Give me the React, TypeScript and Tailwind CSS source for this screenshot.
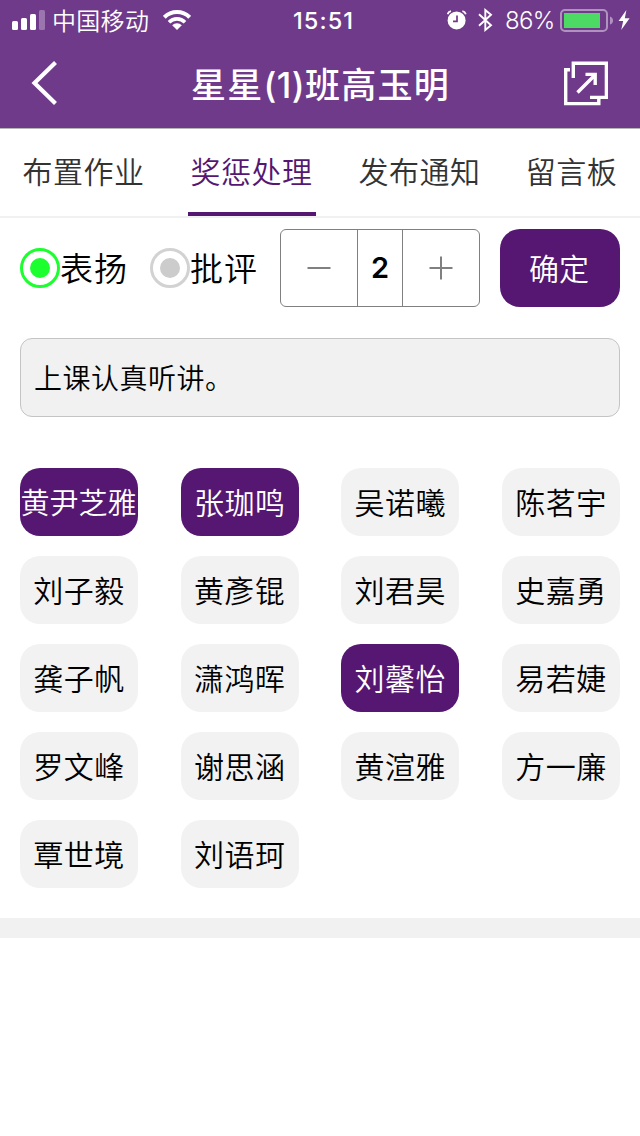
import { useState } from "react";
import clsx from "clsx";

const tabs = [
  { label: "布置作业", width: "w-32" },
  { label: "奖惩处理", width: "w-32" },
  { label: "发布通知", width: "w-32" },
  { label: "留言板", width: "w-24" },
];

const students = [
  "黄尹芝雅", "张珈鸣", "吴诺曦", "陈茗宇",
  "刘子毅", "黄彥锟", "刘君昊", "史嘉勇",
  "龚子帆", "潇鸿晖", "刘馨怡", "易若婕",
  "罗文峰", "谢思涵", "黄渲雅", "方一廉",
  "覃世境", "刘语珂",
];

const StatusBar = () => (
  <div className="flex h-10 items-center pl-3 pr-[10px]">
    <svg width="34" height="20" viewBox="0 0 34 20" fill="#fff">
      <rect x="0" y="11" width="6" height="9" rx="1.5" />
      <rect x="9" y="8" width="6" height="12" rx="1.5" />
      <rect x="18" y="4" width="6" height="16" rx="1.5" />
      <rect x="27" y="0" width="6" height="20" rx="1.5" opacity="0.3" />
    </svg>
    <div className="ml-[6px] w-[98px] whitespace-nowrap text-[24px] font-[350] leading-10 tracking-[0.3px]">中国移动</div>
    <svg className="ml-[13px]" width="28" height="20" viewBox="0 0 28 20" fill="none" stroke="#fff">
      <path d="M1.3 7.3A18 18 0 0 1 26.7 7.3" strokeWidth="4" />
      <path d="M6 12.2A11.3 11.3 0 0 1 22 12.2" strokeWidth="3.6" />
      <path d="M14 20L9.2 15.2A6.8 6.8 0 0 1 18.8 15.2Z" fill="#fff" stroke="none" />
    </svg>
    <div className="ml-[102px] w-[64px] whitespace-nowrap pt-0.5 font-['Inter'] text-[23.5px] font-medium leading-10 tracking-[1.1px]">15:51</div>
    <div className="flex flex-1 items-center justify-end">
      <svg width="20" height="20" viewBox="0 0 20 20">
        <circle cx="9.6" cy="10.4" r="9" fill="#fff" />
        <path d="M0.6 4.2Q1.4 1.6 4 1.1M18.8 4.2Q18 1.6 15.4 1.1" fill="none" stroke="#fff" strokeWidth="1.8" />
        <path d="M10 5.5V11.4H6" fill="none" stroke="#703a8a" strokeWidth="1.7" />
      </svg>
      <svg className="ml-[11px]" width="15" height="24" viewBox="0 0 15 24" fill="none" stroke="#fff" strokeWidth="1.9">
        <path d="M1 6.3L13 17.2L7.3 22V2L13 6.8L1 17.7" />
      </svg>
      <div className="ml-3 w-[55px] whitespace-nowrap pt-0.5 font-['Inter'] text-[24px] font-[350] leading-10 tracking-[-0.7px]">86%</div>
      <svg className="mt-px" width="54" height="24" viewBox="0 0 54 24">
        <rect x="1" y="1" width="46" height="21" rx="4" fill="none" stroke="#fff" strokeOpacity="0.45" strokeWidth="2" />
        <rect x="4" y="4" width="36" height="15" fill="#4cd964" />
        <path d="M50 7.5Q53 8.5 53 11.5T50 15.5Z" fill="#fff" fillOpacity="0.45" />
      </svg>
      <svg className="ml-1" width="12" height="20" viewBox="0 0 12 20" fill="#fff">
        <path d="M8.4 0L0.6 11H5.2L3.2 20L11.6 8.2H6.8Z" />
      </svg>
    </div>
  </div>
);

const Navbar = () => (
  <nav className="flex h-[88px] items-center justify-between px-[30px]">
    <svg className="-mt-0.5" width="48" height="44" viewBox="0 0 48 44" fill="none" stroke="#fff" strokeWidth="4.2">
      <path d="M25.5 1.5L4.5 22L25.5 42.5" />
    </svg>
    <h1 className="whitespace-nowrap pb-px pl-[3px] text-[35px] font-medium leading-[80px] tracking-[1.3px]">
      星星<span className="font-['Inter'] text-[35px] font-medium tracking-[0.3px]">(1)</span>班高玉明
    </h1>
    <svg className="-mt-0.5 mr-0.5" width="48" height="46" viewBox="0 0 48 46" fill="none" stroke="#fff" strokeWidth="3.4">
      <path d="M13.3 18V3.2H46.4V37.4H30" />
      <path d="M10 9.8H5.7V43.6H38.8V39" />
      <path d="M17.5 32.5L35 15M25.5 14.4H35.2V25" />
    </svg>
  </nav>
);

const Radio = ({ label, checked, onClick }: { label: string; checked: boolean; onClick: () => void }) => (
  <button className="flex w-[110px] items-center" onClick={onClick}>
    <span
      className={clsx(
        "flex size-10 shrink-0 items-center justify-center rounded-full border-[3px]",
        checked ? "border-[#1aff2d]" : "border-[#d2d2d2]"
      )}
    >
      <span className={clsx("size-5 rounded-full", checked ? "bg-[#1aff2d]" : "bg-[#cccccc]")} />
    </span>
    <span className="whitespace-nowrap pb-0.5 text-[33px] font-[350] leading-[38px] tracking-[1px]">{label}</span>
  </button>
);

const App = () => {
  const [activeTab, setActiveTab] = useState(1);
  const [praise, setPraise] = useState(true);
  const [score, setScore] = useState(2);
  const [selected, setSelected] = useState(["黄尹芝雅", "张珈鸣", "刘馨怡"]);

  const toggle = (name: string) => {
    setSelected(selected.includes(name) ? selected.filter((n) => n !== name) : [...selected, name]);
  };

  return (
    <div className="min-h-[1136px] w-[640px] bg-white font-['Noto_Sans_CJK_SC',sans-serif] text-black">
      <header className="h-32 bg-[#703a8a] text-white">
        <StatusBar />
        <Navbar />
      </header>

      <div className="flex h-[90px] justify-between border-t border-b-2 border-t-[#b5b5b5] border-b-[#f1f1f1] px-5">
        {tabs.map((tab, i) => (
          <button
            key={tab.label}
            onClick={() => setActiveTab(i)}
            className={clsx(
              "whitespace-nowrap border-b-4 pb-0.5 pr-px text-[30px] font-[350] leading-[78px] tracking-[0.5px]",
              tab.width,
              i === activeTab ? "border-[#551771] text-[#551771]" : "border-transparent text-[#333333]"
            )}
          >
            {tab.label}
          </button>
        ))}
      </div>

      <section className="flex h-[100px] items-center px-5">
        <div className="flex gap-5">
          <Radio label="表扬" checked={praise} onClick={() => setPraise(true)} />
          <Radio label="批评" checked={!praise} onClick={() => setPraise(false)} />
        </div>
        <div className="ml-5 flex h-[78px] w-[200px] rounded-md border border-[#808080]">
          <button className="flex flex-1 items-center justify-center" onClick={() => setScore(score - 1)}>
            <svg width="24" height="24" viewBox="0 0 24 24" stroke="#808080" strokeWidth="2">
              <path d="M0.5 12H23.5" />
            </svg>
          </button>
          <div className="flex w-[46px] items-center justify-center border-x border-[#808080] font-['Inter'] text-[29px] font-semibold">
            {score}
          </div>
          <button className="flex flex-1 items-center justify-center" onClick={() => setScore(score + 1)}>
            <svg width="24" height="24" viewBox="0 0 24 24" stroke="#808080" strokeWidth="2">
              <path d="M0.5 12H23.5M12 0.5V23.5" />
            </svg>
          </button>
        </div>
        <button className="ml-5 h-[78px] w-[120px] rounded-[20px] bg-[#551771] pb-0.5 pr-0.5 text-[30px] font-[350] text-white">确定</button>
      </section>

      <section className="px-5 pt-5">
        <div className="flex h-[79px] items-center rounded-xl border border-[#c4c4c4] bg-[#f1f1f1] pb-0.5 pl-[13px] text-[28px] font-[350] tracking-[0.5px]">
          上课认真听讲。
        </div>
      </section>

      <section className="mt-[51px] grid grid-cols-[repeat(4,118px)] justify-between gap-y-5 px-5 pb-[30px]">
        {students.map((name) => (
          <button
            key={name}
            onClick={() => toggle(name)}
            className={clsx(
              "flex h-[68px] items-center justify-center whitespace-nowrap rounded-[20px] font-[350]",
              name.length > 3 ? "pr-px text-[29px]" : "pb-0.5 text-[30px] tracking-[0.5px]",
              selected.includes(name) ? "bg-[#551771] text-white" : "bg-[#f2f2f2]"
            )}
          >
            {name}
          </button>
        ))}
      </section>

      <div className="h-5 bg-[#f1f1f1]" />
    </div>
  );
};

export default App;
